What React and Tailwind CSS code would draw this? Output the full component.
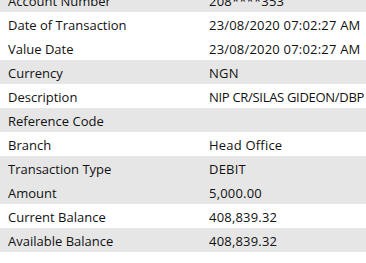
export default function App() {
  const rows = [
    ["Account Number", "208****353", true, "tracking-[0.2px]"],
    ["Date of Transaction", "23/08/2020 07:02:27 AM", false, "tracking-[0.2px]"],
    ["Value Date", "23/08/2020 07:02:27 AM", false, "tracking-[0.2px]"],
    ["Currency", "NGN", true, "tracking-[0.2px]"],
    ["Description", "NIP CR/SILAS GIDEON/DBP", false, "tracking-[-0.3px]"],
    ["Reference Code", "", true, ""],
    ["Branch", "Head Office", false, "tracking-[0.2px]"],
    ["Transaction Type", "DEBIT", true, "tracking-[0.2px]"],
    ["Amount", "5,000.00", true, "tracking-[0.2px]"],
    ["Current Balance", "408,839.32", false, "tracking-[0.2px]"],
    ["Available Balance", "408,839.32", true, "tracking-[0.2px]"],
  ];
  return (
    <div className="w-[366px] h-[263px] overflow-hidden bg-white text-[13px] text-[#111] whitespace-nowrap" style={{ fontFamily: '"Open Sans", sans-serif' }}>
      <div className="-mt-[12px] flex flex-col">
        {rows.map(([k, v, g, t], i) => (
          <div key={i} className={`flex h-[24px] items-center pt-[3px] ${g ? "bg-[#e6e6e6]" : "bg-white"}`}>
            <div className="w-[209px] pl-[8px] shrink-0">{k}</div>
            <div className={`overflow-hidden ${t}`}>{v}</div>
          </div>
        ))}
      </div>
    </div>
  );
}
